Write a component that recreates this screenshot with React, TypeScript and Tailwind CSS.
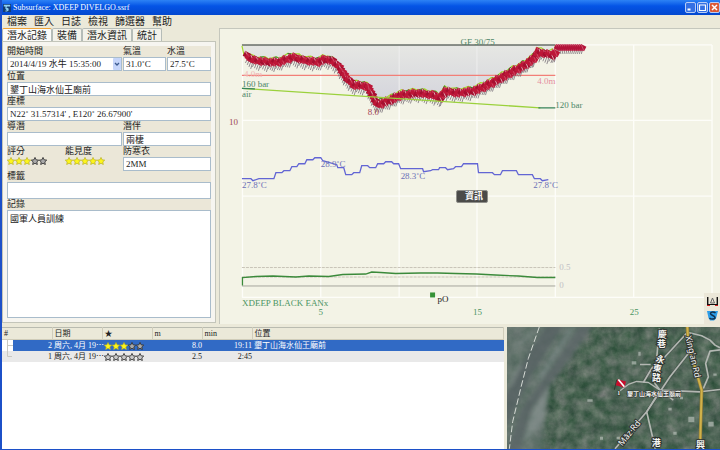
import type { ReactNode } from "react";

type Point = [number, number];

const MENUS = ["檔案", "匯入", "日誌", "檢視", "篩選器", "幫助"];
const TABS = ["潛水記錄", "裝備", "潛水資訊", "統計"];

const DIVES = [
  { id: 2, date: "周六, 4月 19⋯", rating: 3, depth: "8.0", duration: "19:11", location: "墾丁山海水仙王廟前", selected: true },
  { id: 1, date: "周六, 4月 19⋯", rating: 0, depth: "2.5", duration: "2:45", location: "", selected: false },
];

const DEPTH: Point[] = [
  [246, 55], [253, 59], [267, 61], [278, 61], [292, 56], [303, 59], [317, 61], [325, 58], [332, 60],
  [338, 65], [345, 76], [353, 84], [367, 85], [372, 95], [377, 104], [390, 99], [400, 94], [417, 92],
  [433, 94], [440, 97], [445, 90], [457, 92], [473, 90], [483, 86], [497, 79], [513, 70], [523, 65],
  [533, 58], [538, 51], [552, 54], [557, 50],
];

const SURFACE: Point[] = [[557, 47], [584, 47]];

const TEMPERATURE =
  "241,178 250,178 252,180 258,178 273,178 275,172 281,172 283,170 289,170 291,166 296,166 298,163 304,163 306,159 312,159 314,157 320,157 322,160 336,164 337,167 343,167 345,174 351,174 353,172 359,172 361,165 367,165 369,167 375,167 377,163 383,163 385,161 391,161 393,163 398,163 400,168 422,168 423,171 430,170 432,169 438,169 439,167 445,167 447,169 453,168 455,166 461,166 463,163 477,163 478,172 492,172 494,174 500,174 502,170 516,170 518,174 532,174 534,178 540,178 542,180 548,179";

const STAR = "M6 0.6 L7.7 4.2 11.6 4.7 8.7 7.4 9.5 11.3 6 9.4 2.5 11.3 3.3 7.4 0.4 4.7 4.3 4.2 Z";

// evenly spaced positions along a polyline
function sample(points: Point[], step: number): Point[] {
  const out: Point[] = [];
  for (let i = 1; i < points.length; i++) {
    const [x1, y1] = points[i - 1];
    const [x2, y2] = points[i];
    const n = Math.max(1, Math.round(Math.hypot(x2 - x1, y2 - y1) / step));
    for (let k = 0; k < n; k++) {
      out.push([x1 + ((x2 - x1) * k) / n, y1 + ((y2 - y1) * k) / n]);
    }
  }
  return out;
}

function Stars({ value, label, plain = false }: { value: number; label: string; plain?: boolean }) {
  return (
    <span role="img" aria-label={label} className="flex h-2">
      {[1, 2, 3, 4, 5].map((n) => (
        <svg key={n} viewBox="0 0 12 12" className="size-2">
          <path
            d={STAR}
            fill={n <= value ? "#fdf51c" : plain ? "#c9c9c9" : "#a9a9a9"}
            stroke={n <= value ? "#b5ae20" : "#333"}
            strokeWidth={n <= value ? 1 : 1.3}
          />
        </svg>
      ))}
    </span>
  );
}

function Field({ id, label, value, className = "", tall = false }: {
  id: string;
  label: string;
  value: string;
  className?: string;
  tall?: boolean;
}) {
  return (
    <div className={`flex flex-col ${className}`}>
      <label htmlFor={id} className="h-[11px] leading-[11px]">{label}</label>
      <input
        id={id}
        defaultValue={value}
        className={`w-full min-w-0 border border-[#a9bccb] bg-white px-[2px] ${tall ? "h-[17px]" : "h-[14px]"}`}
      />
    </div>
  );
}

function WindowButton({ label, close = false, children }: { label: string; close?: boolean; children: ReactNode }) {
  return (
    <button
      aria-label={label}
      className={`flex size-[11px] items-center justify-center rounded-xs border border-[#b8cdf5] ${close ? "bg-[#dc5a36]" : "bg-[#3470e4]"}`}
    >
      <svg viewBox="0 0 9 9" className="size-[9px]" fill="none" stroke="#fff">{children}</svg>
    </button>
  );
}

function TitleBar() {
  return (
    <header className="flex h-[15px] items-center justify-between bg-linear-to-b from-[#2d82f5] via-[#0554e6] via-40% to-[#0348cf] pl-px">
      <div className="flex items-center gap-[2px]">
        <svg viewBox="0 0 10 10" className="size-2">
          <rect width="10" height="10" fill="#123c74" />
          <path d="M1 1h8v2H5.500L4 4l3 1.500V8L5 9.500H3V8h2L3 6V3H1z" fill="#8fd0f0" />
        </svg>
        <h1 className="text-[8px] leading-[15px] text-white">Subsurface: XDEEP DIVELGO.ssrf</h1>
      </div>
      <div className="flex gap-px">
        <WindowButton label="最小化"><path d="M1.500 6.500h3" strokeWidth="2" /></WindowButton>
        <WindowButton label="最大化"><path d="M1.500 2v5.500h6V2z M1 2h7" strokeWidth="1.200" /></WindowButton>
        <WindowButton label="關閉" close><path d="M2 2l5 5M7 2l-5 5" strokeWidth="1.500" /></WindowButton>
      </div>
    </header>
  );
}

function DivePanel() {
  return (
    <section className="w-[214px] shrink-0">
      <div role="tablist" className="flex h-[13px] text-[10px]">
        {TABS.map((tab, i) => (
          <button
            key={tab}
            role="tab"
            aria-selected={i === 0}
            className={`rounded-t-xs border-x border-t px-1 leading-[11px] ${
              i === 0 ? "border-x-[#b5bcb8] border-t-[#efa338] bg-[#fbfbf9]" : "border-[#b5bcb8] bg-[#f3f2ea]"
            }`}
          >
            {tab}
          </button>
        ))}
      </div>
      <div className="border border-[#c3c5ba] bg-[#f6f5f0] p-1">
        <div className="flex flex-col bg-[#ebe7d8]">
          <div className="flex gap-px">
            <div className="flex flex-1 flex-col">
              <label htmlFor="start" className="h-[11px] leading-[11px]">開始時間</label>
              <div className="relative">
                <select id="start" className="block h-[14px] w-full appearance-none border border-[#a9bccb] bg-white px-[2px] leading-3">
                  <option>2014/4/19 水牛 15:35:00</option>
                </select>
                <svg viewBox="0 0 8 12" className="pointer-events-none absolute top-px right-px h-3 w-2">
                  <rect width="8" height="12" rx="1" fill="#c5d5fa" />
                  <path d="M2 5l2 2 2-2" fill="none" stroke="#3c5a90" strokeWidth="1.300" />
                </svg>
              </div>
            </div>
            <Field id="air-temp" label="氣溫" value="31.0˚C" className="w-[43px]" />
            <Field id="water-temp" label="水溫" value="27.5˚C" className="w-[44px]" />
          </div>
          <Field id="location" label="位置" value="墾丁山海水仙王廟前" />
          <Field id="coordinates" label="座標" value="N22˚ 31.57314' , E120˚ 26.67900'" />
          <div className="flex gap-px">
            <Field id="master" label="導潛" value="" className="flex-1" />
            <Field id="buddy" label="潛伴" value="兩棲" className="w-[88px]" />
          </div>
          <div className="flex gap-px">
            <div className="flex flex-1">
              <div className="flex w-[58px] flex-col">
                <span className="h-[11px] leading-[11px]">評分</span>
                <Stars value={3} label="評分 3" />
              </div>
              <div className="flex flex-col">
                <span className="h-[11px] leading-[11px]">能見度</span>
                <Stars value={5} label="能見度 5" />
              </div>
            </div>
            <Field id="suit" label="防寒衣" value="2MM" className="w-[88px]" />
          </div>
          <Field id="tags" label="標籤" value="" tall />
          <label htmlFor="notes" className="h-[11px] leading-[11px]">記錄</label>
          <textarea
            id="notes"
            defaultValue="國軍人員訓練"
            className="block h-[108px] w-full resize-none border border-[#a9bccb] bg-white px-[2px] py-[2px] leading-3"
          />
        </div>
      </div>
    </section>
  );
}

function Profile() {
  const line = DEPTH.map((p) => p.join(",")).join(" ");
  const marks = sample(DEPTH, 2);
  const surface = sample(SURFACE, 2);
  const ceiling = marks
    .filter((_, i) => i % 2 === 0)
    .map(([x, y], i) => `${x - 1},${y - 3 - (i % 3)}`)
    .join(" ");
  return (
    <svg viewBox="219 28 501 296" className="block w-full" aria-label="潛水剖面圖">
      <defs>
        <linearGradient id="depth-fill" x1="0" y1="0" x2="0" y2="1">
          <stop offset="0" stopColor="#e6e7e3" />
          <stop offset="1" stopColor="#d3d3dc" />
        </linearGradient>
      </defs>
      <path
        d="M241.500 44V297M320 44V297M398.500 44V297M476.500 44V297M555 44V297M633.500 44V297M712 44V297M241 44H712M241 119.500H712M241 195.500H712M241 297H712"
        stroke="#fdfdf9"
        strokeWidth="1.300"
        fill="none"
      />
      <polygon points={`241,44 244,54 ${line} 555,44`} fill="url(#depth-fill)" />
      <path d="M320 44V57M398.500 44V93M476.500 44V88" stroke="#eeeeee" />
      <path d="M241 44H555" stroke="#666c66" strokeWidth="1.600" />
      <path d="M241 74.500H555" stroke="#f27f78" strokeWidth="1.200" />
      <g className="text-[9px]">
        <text x="243" y="76" fill="#f0b5b5">4.0m</text>
        <text x="537" y="83" fill="#e58fa0">4.0m</text>
      </g>
      <g stroke="#777078" strokeWidth="0.800">
        {marks.map(([x, y], i) => (
          <path key={i} d={`M${x + 1} ${y + 2}l-2.500 ${5 + ((i * 5) % 4)}`} />
        ))}
        {surface.map(([x, y], i) => (
          <path key={i} d={`M${x} ${y + 2}l-1 4`} />
        ))}
      </g>
      <polyline points={`241,45 243,54 ${ceiling}`} fill="none" stroke="#a4d82c" strokeWidth="1.200" />
      <polyline points={ceiling} fill="none" stroke="#2d7d3c" strokeDasharray="4 11" />
      <path d="M535 58L536 46M554 54L555 44" stroke="#d18b30" />
      {marks.map(([x, y], i) => (
        <g key={i} transform={`translate(${x} ${y + ((i * 7) % 5) * 0.6 - 0.8}) rotate(28)`}>
          <rect x="-3.500" y="-3" width="7" height="5.500" fill={i % 3 ? "#bd1738" : "#a50f30"} />
          <path d="M-3 -2.700L3 2.200" stroke={i % 3 === 0 ? "#f3d5da" : "#cf5870"} strokeWidth="0.700" />
        </g>
      ))}
      {surface.map(([x, y], i) => (
        <g key={i} transform={`translate(${x} ${y}) rotate(28)`}>
          <rect x="-3" y="-3" width="6" height="5" fill="#b3143a" />
          <path d="M-2.500 -2.500L2.500 1.700" stroke="#d0647a" strokeWidth="0.700" />
        </g>
      ))}
      <path d="M241 87.500L540 107" stroke="#9bd13c" strokeWidth="1.300" />
      <path d="M241 87.500L254 88M538 107H555" stroke="#37835a" strokeWidth="1.300" />
      <polyline points={TEMPERATURE} fill="none" stroke="#6265d4" strokeWidth="1.300" />
      <path d="M241 267H555M241 276.500H555" stroke="#c9c5b8" strokeDasharray="3 1" />
      <path d="M241 285.500H555" stroke="#a5a59d" />
      <path
        d="M241.500 285V277L255 276 272 275.500 295 276.500 308 275.500 328 276 342 274 365 273.500 371 271.500 380 272 395 273 420 272.500 437 272.500 455 273 476 273.500 495 274.500 518 275.500 537 277 555 277"
        fill="none"
        stroke="#3b8a3b"
        strokeWidth="1.300"
      />
      <rect x="429.500" y="292" width="5" height="5" fill="#379237" />
      <g className="text-[9px]">
        <g fill="#4c8668">
          <text x="460" y="44">GF 30/75</text>
          <text x="241" y="86">160 bar</text>
          <text x="241" y="96">air</text>
          <text x="555" y="107">120 bar</text>
        </g>
        <text x="367" y="114" fill="#a54454">8.0</text>
        <text x="228" y="124" fill="#9d4451">10</text>
        <g fill="#6b70b8">
          <text x="241" y="187">27.8˚C</text>
          <text x="320" y="166">28.9˚C</text>
          <text x="400" y="178">28.3˚C</text>
          <text x="533" y="187">27.8˚C</text>
        </g>
        <g fill="#c1bfc5">
          <text x="559" y="269">0.5</text>
          <text x="559" y="288">0</text>
        </g>
        <g fill="#4a9362">
          <text x="241" y="306">XDEEP BLACK EANx</text>
          <text x="320" y="315" textAnchor="middle">5</text>
          <text x="477" y="315" textAnchor="middle">15</text>
          <text x="634" y="315" textAnchor="middle">25</text>
        </g>
        <text x="437" y="302" fill="#222">pO</text>
      </g>
    </svg>
  );
}

function ProfilePanel() {
  return (
    <section className="relative flex-1 border-t border-l border-[#c5c7bd] bg-[#f3f3e6]">
      <Profile />
      <button className="absolute top-[161px] left-[236px] h-[13px] w-[32px] rounded-xs border border-[#8f8f8a] bg-[#4b4b49] pl-1 text-[9px] leading-[11px] font-bold text-white">
        資訊
      </button>
      <div className="absolute right-0 bottom-0 flex w-4 flex-col items-center gap-1 bg-[#ebe7d8] py-[3px]">
        <button aria-label="標尺">
          <svg viewBox="0 0 11 10" className="block h-[10px] w-[11px]" fill="none" stroke="#111">
            <path d="M0.700 1v8M10.300 1v8" strokeWidth="1.400" />
            <path d="M3.500 7L5.500 2 7.500 7z" stroke="#666" />
            <path d="M0 9.500h3M8 9.500h3" stroke="#d42020" />
            <path d="M1 8.500h9" />
          </svg>
        </button>
        <button aria-label="縮放">
          <svg viewBox="0 0 11 11" className="block size-[11px]">
            <path d="M0 1h11L9 8.500 7 10.500H3L1.500 8z" fill="#2c9de8" />
            <path d="M8.500 3C7 1.500 3.500 1.500 3.500 3.500S8 5.500 8 7.500 4 9.500 2.500 8" fill="none" stroke="#12314e" strokeWidth="1.500" />
          </svg>
        </button>
      </div>
    </section>
  );
}

function DiveList() {
  return (
    <section className="flex-1 bg-white">
      <table className="w-full table-fixed text-[8px] leading-[11px]">
        <colgroup>
          <col className="w-[50px]" />
          <col className="w-[50px]" />
          <col className="w-[50px]" />
          <col className="w-[50px]" />
          <col className="w-[50px]" />
          <col />
        </colgroup>
        <thead>
          <tr className="h-3 border-t border-b border-t-[#b9bbb0] border-b-[#cfccb9] bg-[#ebe9d9] text-left">
            {["#", "日期", "★", "m", "min", "位置"].map((name) => (
              <th key={name} className="border-r border-[#d0cdbb] p-0 pl-[2px] font-normal">{name}</th>
            ))}
          </tr>
        </thead>
        <tbody>
          {DIVES.map((dive) => (
            <tr key={dive.id} className={`h-[11px] whitespace-nowrap ${dive.selected ? "bg-[#316ac5] text-white" : "bg-[#e9e9e9]"}`}>
              <td className="p-0">
                <div className="flex">
                  <svg viewBox="0 0 11 11" className={`size-[11px] ${dive.selected ? "bg-white" : ""}`}>
                    <path d={dive.selected ? "M5.500 0V11M5.500 5.500H11" : "M5.500 0V5.500H10"} stroke="#c9c9c2" fill="none" />
                  </svg>
                  <span className="flex-1 text-right">{dive.id}</span>
                </div>
              </td>
              <td className="p-0 pl-[2px]">{dive.date}</td>
              <td className="p-0 pl-[2px]"><Stars value={dive.rating} label={`評分 ${dive.rating}`} plain={!dive.selected} /></td>
              <td className="p-0 text-right">{dive.depth}</td>
              <td className="p-0 text-right">{dive.duration}</td>
              <td className="p-0 pl-[2px]">{dive.location}</td>
            </tr>
          ))}
        </tbody>
      </table>
    </section>
  );
}

function DiveMap() {
  return (
    <section className="relative w-[213px] shrink-0 overflow-hidden bg-[#4d6356]">
      <svg viewBox="21 15 639 366" preserveAspectRatio="xMidYMid slice" className="absolute size-full" aria-label="地圖">
        <defs>
          <filter id="fields" x="0" y="0" width="100%" height="100%" colorInterpolationFilters="sRGB">
            <feTurbulence type="fractalNoise" baseFrequency="0.03" numOctaves="5" seed="8" />
            <feColorMatrix values="0.38 0 0 0 0.12  0.26 0.06 0 0 0.24  0.32 0 0 0 0.18  0 0 0 0 1" />
          </filter>
          <filter id="soft"><feGaussianBlur stdDeviation="6" /></filter>
        </defs>
        <rect x="21" y="15" width="639" height="366" filter="url(#fields)" />
        <g filter="url(#soft)">
          <path d="M0 0H290L215 110 150 190 125 400H0z" fill="#717d7a" opacity="0.6" />
          <path d="M190 10L100 150 10 330V240L70 120 140 10z" fill="#566063" opacity="0.7" />
          <path d="M280 10L180 150 95 260 60 390H20L60 270 160 130 240 10z" fill="#596367" opacity="0.7" />
          <path d="M150 190l-50 70-30 100 55-50z" fill="#8b9595" opacity="0.6" />
          <path d="M215 20L120 170" stroke="#89959a" strokeWidth="8" opacity="0.6" />
          <path d="M40 80L100 30M30 190L60 130" stroke="#8a9494" strokeWidth="12" opacity="0.5" />
        </g>
        <g fill="#b4bcb5" opacity="0.7">
          <path d="M262 232h16v8h-16zM395 118h14v10h-14zM565 285h18v16h-18zM625 300h16v14h-16zM520 330h10v9h-10zM300 345h9v9h-9zM505 258h10v8h-10zM415 90h7v12h-7zM540 225h9v7h-9zM350 345h12v7h-12zM640 155h10v7h-10z" />
        </g>
        <path d="M118 15L85 110 62 200 38 300 28 381" fill="none" stroke="#d6dad5" strokeWidth="3" strokeDasharray="20 8" />
        <g fill="none" stroke="#454e49" strokeWidth="9" opacity="0.6">
          <path d="M562 32L495 105 455 140 430 182M565 95L510 165 440 270 345 381M480 205L600 210 660 203" />
        </g>
        <g fill="none" stroke="#b3b7b2" strokeWidth="5" strokeLinejoin="round">
          <path d="M562 32L495 105 455 140 430 182M565 95L510 165 440 270 345 381M440 270L466 381M478 20L470 110 465 185 480 205 600 210 660 203" />
          <path d="M565 32L605 42 630 55 645 70 660 78M660 84L630 88 617 125 625 165 610 200" />
          <path d="M360 207L385 188 410 179 445 182 480 205M420 128H452M440 270L480 205 520 235" strokeWidth="4" />
        </g>
        <path d="M562 15L565 70 580 120 605 205 600 381" fill="none" stroke="#907a35" strokeWidth="10" />
        <path d="M562 15L565 70 580 120 605 205 600 381" fill="none" stroke="#d0b24a" strokeWidth="6" />
        <path d="M350 174l-7 30" stroke="#222" strokeWidth="2" />
        <path d="M353 172l25 7-5 18-26-7z" fill="#c80d2b" />
        <path d="M355 173l18 22" stroke="#fff" strokeWidth="5" />
        <g fill="#f5f5f2" stroke="#2e3330" strokeWidth="6" paintOrder="stroke" className="font-bold">
          <g className="text-[27px]">
            <text x="473" y="48">慶</text>
            <text x="471" y="75">巷</text>
            <text x="468" y="122" transform="rotate(20 480 112)">永</text>
            <text x="458" y="149" transform="rotate(10 470 140)">東</text>
            <text x="456" y="178">路</text>
            <text x="455" y="372">港</text>
            <text x="588" y="378">興</text>
          </g>
          <text x="556" y="44" transform="rotate(77 556 44)" className="font-sans text-[26px] font-normal">Xing'an Rd</text>
          <text x="367" y="374" transform="rotate(-51 367 374)" className="font-sans text-[26px] font-normal">Māz·Rd</text>
          <text x="381" y="224" strokeWidth="3" className="text-[18px]">墾丁山海水仙王廟前</text>
          <text x="352" y="221" strokeWidth="3" className="text-[18px]">1</text>
        </g>
      </svg>
    </section>
  );
}

export default function App() {
  return (
    <div className="flex min-h-screen flex-col border-b border-l-2 border-[#1c50c8] bg-[#ebe9d9] font-['Liberation_Serif','Noto_Sans_CJK_TC',serif] text-[9px] text-[#222]">
      <TitleBar />
      <nav className="flex h-[13px] gap-[7px] px-[5px] text-[10px] leading-3">
        {MENUS.map((menu) => (
          <button key={menu}>{menu}</button>
        ))}
      </nav>
      <main className="flex flex-1 flex-col gap-[3px]">
        <div className="flex gap-[3px]">
          <DivePanel />
          <ProfilePanel />
        </div>
        <div className="flex flex-1 gap-[3px]">
          <DiveList />
          <DiveMap />
        </div>
      </main>
    </div>
  );
}
